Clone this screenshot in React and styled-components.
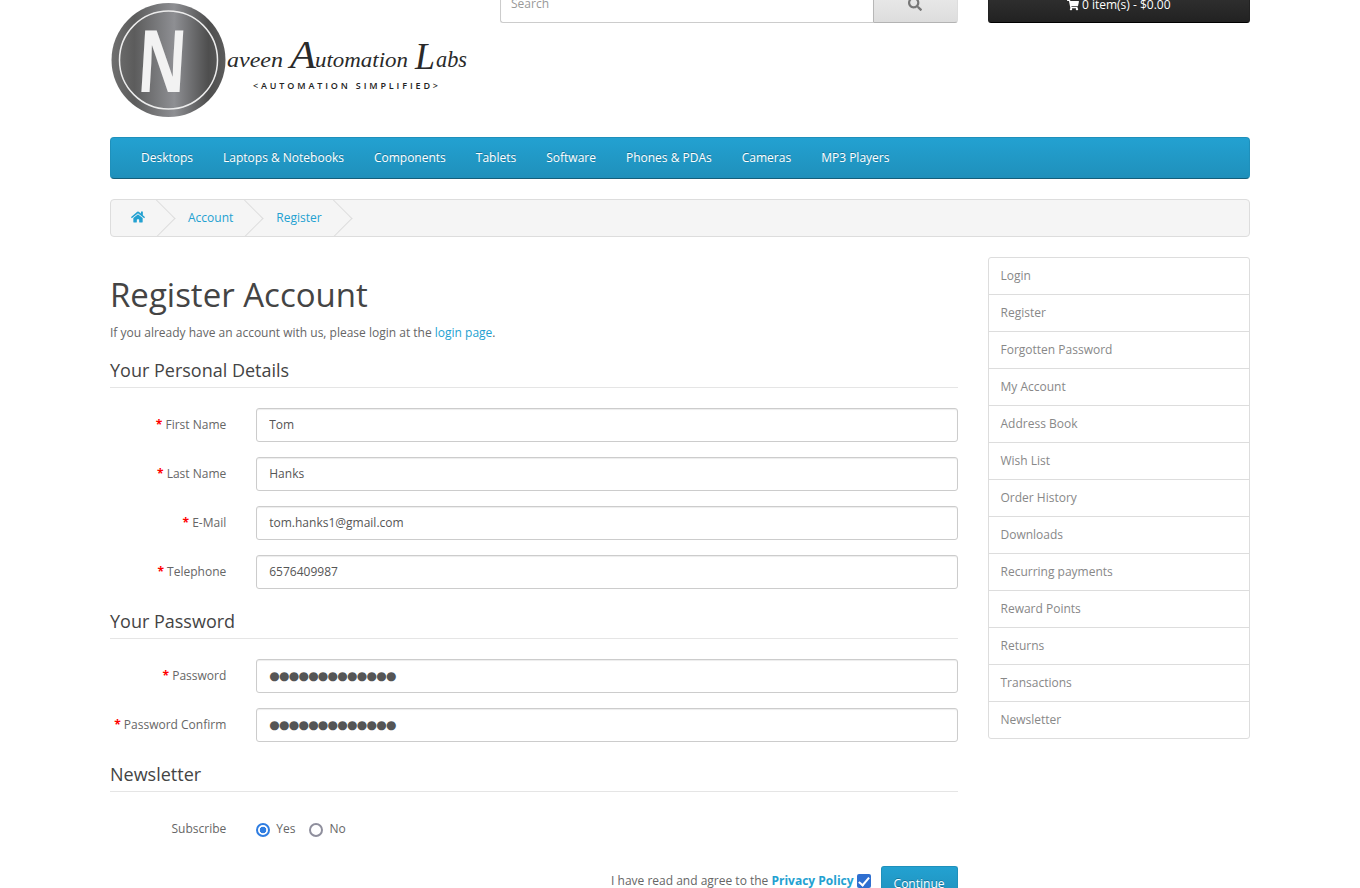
import React from 'react'
import styled, { createGlobalStyle } from 'styled-components'
import { FaHome, FaSearch, FaShoppingCart } from 'react-icons/fa'

const GlobalStyle = createGlobalStyle`
    html, body {
        margin: 0;
        height: 888px;
        overflow: hidden;
        background: #fff;
    }
    body {
        font-family: "Open Sans", sans-serif;
        font-size: 12px;
        line-height: 20px;
        color: #666;
    }
    * {
        box-sizing: border-box;
    }
`

// the reference is photographed a little way down the page
const Page = styled.div`
    width: 1140px;
    margin: -17px auto 0;
`
const Header = styled.header`
    display: grid;
    grid-template-columns: 360px 457.5px 262.5px;
    column-gap: 30px;
    height: 154px;
`
const Logo = styled.svg`
    display: block;
    width: 360px;
    height: 125px;
    margin-top: 17px;
`
const Search = styled.div`
    display: flex;
    height: 40px;
`
const SearchInput = styled.input`
    flex: 1;
    min-width: 0;
    height: 40px;
    padding: 10px;
    border: 1px solid #ccc;
    border-right: 0;
    border-radius: 3px 0 0 3px;
    box-shadow: inset 0 1px 1px rgba(0,0,0,.075);
    font: 12px "Open Sans", sans-serif;
    color: #555;
    &::placeholder {
        color: #999;
        opacity: 1;
    }
`
const SearchButton = styled.button`
    width: 85px;
    padding: 2px 0 0;
    border: 1px solid;
    border-color: #ddd #ddd #b3b3b3 #b7b7b7;
    border-radius: 0 3px 3px 0;
    background: linear-gradient(to bottom, #eeeeee, #dddddd);
    color: #777;
    svg {
        display: block;
        margin: 0 auto;
    }
`
const Cart = styled.button`
    display: flex;
    align-items: center;
    justify-content: center;
    gap: 3px;
    width: 100%;
    height: 40px;
    padding: 14px 16px 10px;
    border: 1px solid;
    border-color: #222 #222 #000;
    border-radius: 3px;
    background: linear-gradient(to bottom, #363636, #222222);
    color: #fff;
    font: 12px/18px "Open Sans", sans-serif;
    text-shadow: 0 -1px 0 rgba(0,0,0,.25);
`
const Menu = styled.nav`
    display: flex;
    height: 42px;
    padding-left: 15px;
    margin-bottom: 20px;
    border: 1px solid;
    border-color: #1f90bb #1f90bb #145e7a;
    border-radius: 4px;
    background: linear-gradient(to bottom, #23a1d1, #1f90bb);
`
const MenuItem = styled.a`
    padding: 10px 15px;
    color: #fff;
    text-shadow: 0 -1px 0 rgba(0,0,0,.25);
`
const Breadcrumb = styled.ul`
    display: flex;
    gap: 3px;
    height: 38px;
    margin: 0 0 20px;
    padding: 8px 0;
    list-style: none;
    border: 1px solid #ddd;
    border-radius: 4px;
    background: #f5f5f5;
    overflow: hidden;
`
const Crumb = styled.li`
    position: relative;
    padding: 0 20px;
    color: #23a1d1;
    svg {
        display: block;
        margin-top: 2px;
    }
    &::after {
        content: "";
        position: absolute;
        top: -3px;
        right: -5px;
        width: 26px;
        height: 26px;
        border-top: 1px solid #ddd;
        border-right: 1px solid #ddd;
        transform: rotate(45deg);
    }
`
const Columns = styled.div`
    display: grid;
    grid-template-columns: 847.5px 262.5px;
    column-gap: 30px;
    align-items: start;
`
const Title = styled.h1`
    margin: 20px 0 10px;
    font-size: 33px;
    font-weight: 400;
    line-height: 36.3px;
    color: #444;
`
const Intro = styled.p`
    margin: 0 0 10px;
`
const TextLink = styled.a`
    color: #23a1d1;
    font-weight: ${p => (p.$bold ? 700 : 400)};
`
const Section = styled.fieldset`
    margin: 0 0 15px;
    padding: 0;
    border: 0;
    min-width: 0;
`
const Legend = styled.div`
    padding: 7px 0;
    margin-bottom: 20px;
    border-bottom: 1px solid #e5e5e5;
    font-size: 18px;
    line-height: 20px;
    color: #444;
`
const Row = styled.div`
    display: grid;
    grid-template-columns: 116.25px 1fr;
    column-gap: 30px;
    & + & {
        margin-top: 15px;
    }
`
const Label = styled.label`
    padding-top: 7px;
    text-align: right;
    ${p => p.$required && `
        &::before {
            content: "* ";
            color: #f00;
            font-weight: 700;
        }
    `}
`
const Input = styled.input`
    display: block;
    width: 100%;
    height: 34px;
    padding: 5px 12px 7px;
    border: 1px solid #ccc;
    border-radius: 3px;
    box-shadow: inset 0 1px 1px rgba(0,0,0,.075);
    background: #fff;
    font-family: "Open Sans", sans-serif;
    font-size: 12px;
    color: #555;
`
const MaskedInput = styled(Input)`
    padding: 6px 12px;
    font-family: "DejaVu Sans", sans-serif;
    letter-spacing: -0.75px;
`
const Radios = styled.div`
    display: flex;
    gap: 14px;
    padding-top: 7px;
`
const RadioLabel = styled.label`
    display: flex;
    align-items: flex-start;
    gap: 6px;
`
const Radio = styled.input.attrs({ type: 'radio', readOnly: true })`
    appearance: none;
    width: 14px;
    height: 14px;
    margin: 4px 0 0;
    border-radius: 50%;
    border: 2px solid #8f8f9d;
    background: #fff;
    &:checked {
        border-color: #2f7de1;
        background: radial-gradient(circle, #2f7de1 0 3px, #fff 3.6px);
    }
`
const Actions = styled.div`
    display: flex;
    justify-content: flex-end;
    align-items: flex-start;
    margin-top: 27px;
`
const Agree = styled.span`
    display: inline-flex;
    align-items: center;
    gap: 3px;
    padding-top: 5px;
    margin-right: 10px;
`
const Checkbox = styled.input.attrs({ type: 'checkbox', readOnly: true })`
    appearance: none;
    position: relative;
    width: 14px;
    height: 14px;
    margin: 0;
    border-radius: 2px;
    background: #2f6fd0;
    &::after {
        content: "";
        position: absolute;
        left: 4px;
        top: 1px;
        width: 4px;
        height: 9px;
        border: solid #fff;
        border-width: 0 2px 2px 0;
        transform: rotate(40deg);
    }
`
const Continue = styled.button`
    height: 35px;
    padding: 6.5px 12px 8.5px;
    border: 1px solid;
    border-color: #1f90bb #1f90bb #145e7a;
    border-radius: 3px;
    background: linear-gradient(to bottom, #23a1d1, #1f90bb);
    color: #fff;
    font: 12px/20px "Open Sans", sans-serif;
    text-shadow: 0 -1px 0 rgba(0,0,0,.25);
`
const SideList = styled.aside`
    display: flex;
    flex-direction: column;
    border: 1px solid #ddd;
    border-radius: 3px;
`
const SideLink = styled.a`
    height: 37px;
    padding: 8px 12px;
    color: #888;
    & + & {
        border-top: 1px solid #ddd;
    }
    &:first-child {
        height: 36px;
    }
`

const menu = ['Desktops', 'Laptops & Notebooks', 'Components', 'Tablets', 'Software', 'Phones & PDAs', 'Cameras', 'MP3 Players']
const sideLinks = ['Login', 'Register', 'Forgotten Password', 'My Account', 'Address Book', 'Wish List', 'Order History', 'Downloads', 'Recurring payments', 'Reward Points', 'Returns', 'Transactions', 'Newsletter']
const personal = [['First Name', 'Tom'], ['Last Name', 'Hanks'], ['E-Mail', 'tom.hanks1@gmail.com'], ['Telephone', '6576409987']]
const dots = '●'.repeat(13)

const script = { fontFamily: 'Liberation Serif', fontStyle: 'italic', fill: '#2a2a2a', lengthAdjust: 'spacingAndGlyphs' }

const NaveenLogo = () => (
    <Logo viewBox="0 0 360 125">
        <defs>
            <linearGradient id="disc" x1="0" x2="1" y1="0" y2="0">
                <stop offset="0" stopColor="#707070" />
                <stop offset="0.2" stopColor="#5c5c5c" />
                <stop offset="0.55" stopColor="#8e8f93" />
                <stop offset="0.85" stopColor="#4e4e4e" />
                <stop offset="1" stopColor="#5c5c5c" />
            </linearGradient>
        </defs>
        <circle cx="58.5" cy="60" r="57" fill="url(#disc)" />
        <circle cx="58.5" cy="60" r="49" fill="none" stroke="#ececec" strokeWidth="1.5" />
        <text transform="translate(26 92) scale(.7 1) skewX(-5)" fontFamily="Open Sans" fontWeight="700" fontSize="86" fill="#f2f2f2">N</text>
        <text x="117" y="67" fontSize="22" textLength="56" {...script}>aveen</text>
        <text x="180" y="68" fontSize="40" textLength="26" {...script}>A</text>
        <text x="205" y="67" fontSize="22" textLength="93" {...script}>utomation</text>
        <text x="305" y="69" fontSize="38" textLength="20" {...script}>L</text>
        <text x="326" y="67" fontSize="24" textLength="31" {...script}>abs</text>
        <text x="143" y="89" fontFamily="Open Sans" fontWeight="600" fontSize="9" textLength="185" fill="#222">&lt;AUTOMATION SIMPLIFIED&gt;</text>
    </Logo>
)

const App = () => (
    <Page>
        <GlobalStyle />
        <Header>
            <NaveenLogo />
            <Search>
                <SearchInput placeholder="Search" />
                <SearchButton><FaSearch size={14} /></SearchButton>
            </Search>
            <Cart><FaShoppingCart size={12} /> 0 item(s) - $0.00</Cart>
        </Header>
        <Menu>
            {menu.map(item => <MenuItem key={item}>{item}</MenuItem>)}
        </Menu>
        <Breadcrumb>
            <Crumb><FaHome size={14} /></Crumb>
            <Crumb>Account</Crumb>
            <Crumb>Register</Crumb>
        </Breadcrumb>
        <Columns>
            <main>
                <Title>Register Account</Title>
                <Intro>If you already have an account with us, please login at the <TextLink>login page</TextLink>.</Intro>
                <Section>
                    <Legend>Your Personal Details</Legend>
                    {personal.map(([label, value]) => (
                        <Row key={label}>
                            <Label $required>{label}</Label>
                            <Input defaultValue={value} />
                        </Row>
                    ))}
                </Section>
                <Section>
                    <Legend>Your Password</Legend>
                    <Row>
                        <Label $required>Password</Label>
                        <MaskedInput defaultValue={dots} />
                    </Row>
                    <Row>
                        <Label $required>Password Confirm</Label>
                        <MaskedInput defaultValue={dots} />
                    </Row>
                </Section>
                <Section>
                    <Legend>Newsletter</Legend>
                    <Row>
                        <Label>Subscribe</Label>
                        <Radios>
                            <RadioLabel><Radio name="newsletter" defaultChecked /> Yes</RadioLabel>
                            <RadioLabel><Radio name="newsletter" /> No</RadioLabel>
                        </Radios>
                    </Row>
                </Section>
                <Actions>
                    <Agree>
                        <span>I have read and agree to the <TextLink $bold>Privacy Policy</TextLink></span>
                        <Checkbox defaultChecked />
                    </Agree>
                    <Continue>Continue</Continue>
                </Actions>
            </main>
            <SideList>
                {sideLinks.map(item => <SideLink key={item}>{item}</SideLink>)}
            </SideList>
        </Columns>
    </Page>
)

export default App
